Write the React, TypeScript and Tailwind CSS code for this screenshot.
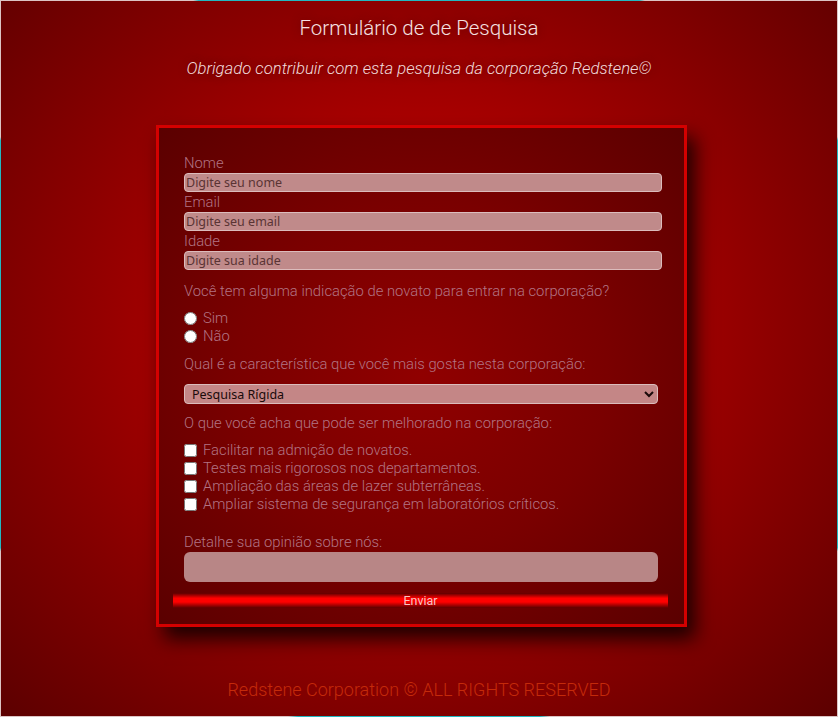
import React from "react";

const labelCls = "block text-[14.8px] leading-[20px] font-light text-[#b27484]";
const inputCls =
  "block w-[478px] h-[19px] rounded-[4px] border border-[#dcbcbc] bg-[#c08a8a] px-[1px] text-[12.5px] text-[#4a2020] placeholder:text-[#5a3434] outline-none [font-family:'Noto_Sans',sans-serif]";
const optionCls =
  "flex items-center gap-[6px] h-[18px] text-[14.8px] font-light text-[#b27484]";

const melhorias = [
  "Facilitar na admição de novatos.",
  "Testes mais rigorosos nos departamentos.",
  "Ampliação das áreas de lazer subterrâneas.",
  "Ampliar sistema de segurança em laboratórios críticos.",
];

export default function App() {
  return (
    <div className="w-full h-[717px] p-px bg-[radial-gradient(ellipse_496px_386px_at_50%_48%,#22b7c0_99.5%,#dcc4c4_100%)]">
      <div className="w-full h-full flex flex-col items-center bg-[radial-gradient(ellipse_at_50%_46%,#b80000_0%,#ac0000_35%,#5c0000_100%)] [font-family:Roboto,'Liberation_Sans',sans-serif]">
        <h1 className="mt-[14px] text-[20.5px] leading-[26px] font-light text-[#f6e0e0] [text-shadow:0_0_8px_rgba(60,0,0,0.6)]">
          Formulário de de Pesquisa
        </h1>
        <p className="mt-[17px] text-[16.7px] leading-[22px] italic font-light text-[#f2dcdc] [text-shadow:0_0_8px_rgba(60,0,0,0.6)]">
          Obrigado contribuir com esta pesquisa da corporação Redstene©
        </p>

        <form className="mt-[45px] ml-[5px] w-[531px] border-[3px] border-[#d40000] bg-[radial-gradient(ellipse_at_center,#900000_0%,#7a0000_50%,#5a0000_100%)] pt-[25px] pb-[16px] pl-[25px] pr-[22px] shadow-[8px_12px_18px_rgba(10,0,0,0.85)]">
          <label className={labelCls}>Nome</label>
          <input className={inputCls} placeholder="Digite seu nome" />
          <label className={labelCls}>Email</label>
          <input className={inputCls} placeholder="Digite seu email" />
          <label className={labelCls}>Idade</label>
          <input className={inputCls} placeholder="Digite sua idade" />

          <p className={`${labelCls} mt-[11px]`}>
            Você tem alguma indicação de novato para entrar na corporação?
          </p>
          <div className="mt-[8px] flex flex-col">
            <label className={optionCls}>
              <input type="radio" name="indicacao" className="m-0 w-[13px] h-[13px]" />
              Sim
            </label>
            <label className={optionCls}>
              <input type="radio" name="indicacao" className="m-0 w-[13px] h-[13px]" />
              Não
            </label>
          </div>

          <p className={`${labelCls} mt-[9px]`}>
            Qual é a característica que você mais gosta nesta corporação:
          </p>
          <select className="mt-[10px] block w-[474px] h-[20px] rounded-[4px] border border-[#dcbcbc] bg-[#c48686] pl-[3px] text-[12.5px] text-[#1a0a0a] [font-family:'Noto_Sans',sans-serif]">
            <option>Pesquisa Rígida</option>
          </select>

          <p className={`${labelCls} mt-[9px]`}>
            O que você acha que pode ser melhorado na corporação:
          </p>
          <div className="mt-[8px] flex flex-col">
            {melhorias.map((m) => (
              <label key={m} className={optionCls}>
                <input type="checkbox" className="m-0 w-[13px] h-[13px]" />
                {m}
              </label>
            ))}
          </div>

          <label className={`${labelCls} mt-[19px] leading-[19px]`}>
            Detalhe sua opinião sobre nós:
          </label>
          <textarea className="block w-[474px] h-[30px] rounded-[6px] bg-[#b88686] resize-none outline-none" />

          <button
            type="button"
            className="mt-[11px] -ml-[11px] block w-[495px] h-[15px] bg-[linear-gradient(to_bottom,#5a0000_0%,#ff0000_35%,#ff0000_60%,#5a0000_100%)] text-[12.5px] leading-[15px] text-[#f8c4c4]"
          >
            Enviar
          </button>
        </form>

        <footer className="mt-[51px] text-[18px] leading-[24px] font-light text-[#c42a0a]">
          Redstene Corporation © ALL RIGHTS RESERVED
        </footer>
      </div>
    </div>
  );
}
